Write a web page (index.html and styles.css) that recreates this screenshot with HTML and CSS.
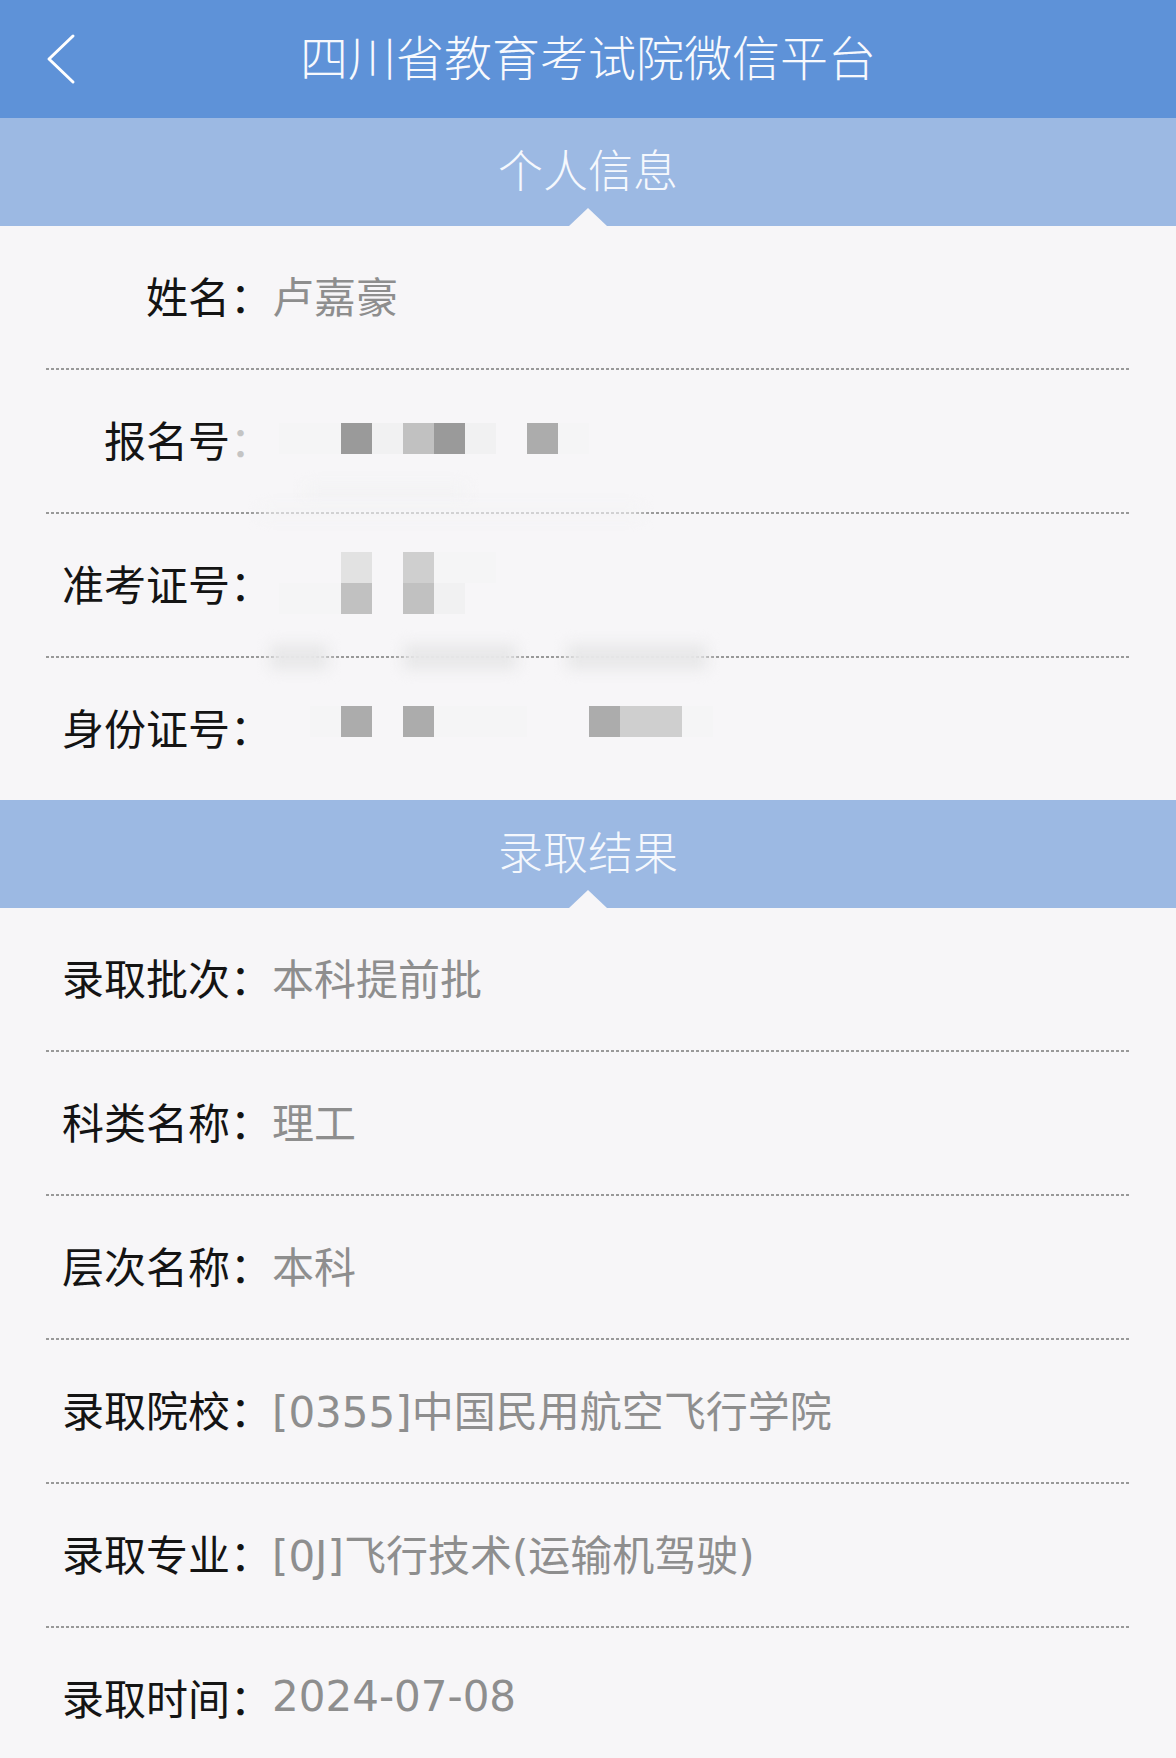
FILE: index.html
```html
<!DOCTYPE html>
<html lang="zh-CN">
<head>
    <meta charset="UTF-8">
    <meta name="viewport" content="width=device-width, initial-scale=1.0">
    <title>四川省教育考试院微信平台</title>
    <link rel="stylesheet" href="styles.css">
</head>
<body>
    <header class="topbar">
        <a class="back" href="#">
            <svg width="30" height="52" viewBox="0 0 30 52">
                <polyline points="27,3 3,26 27,49" fill="none" stroke="#fff" stroke-width="3" stroke-linecap="round" stroke-linejoin="round"/>
            </svg>
        </a>
        <h1>四川省教育考试院微信平台</h1>
        <span></span>
    </header>

    <section class="panel">
        <h2 class="panel-title">个人信息</h2>
        <div class="list">
            <div class="row">
                <span class="label">姓名：</span>
                <span class="value">卢嘉豪</span>
            </div>
            <div class="row">
                <span class="label">报名号<span class="faded">：</span></span>
                <div class="mosaic">
                    <i class="m0"></i><i class="m0"></i><i class="m6"></i><i class="m1"></i><i class="m4"></i>
                    <i class="m6"></i><i class="m1"></i><i></i><i class="m5"></i><i class="m0"></i>
                </div>
                <span class="smudge smudge-faint"></span>
            </div>
            <div class="row">
                <span class="label">准考证号：</span>
                <div class="mosaic">
                    <i></i><i></i><i class="m2"></i><i></i><i class="m3"></i><i class="m0"></i><i class="m0"></i><i></i>
                    <i class="m0"></i><i class="m0"></i><i class="m4"></i><i></i><i class="m4"></i><i class="m1"></i><i></i><i></i>
                </div>
                <span class="smudge smudge-top"></span>
            </div>
            <div class="row">
                <span class="label">身份证号：</span>
                <div class="mosaic mosaic-wide">
                    <i></i><i class="m0"></i><i class="m5"></i><i></i><i class="m5"></i><i class="m0"></i><i class="m0"></i>
                    <i class="m0"></i><i></i><i></i><i class="m5"></i><i class="m3"></i><i class="m3"></i><i class="m0"></i>
                </div>
                <span class="smudge s1"></span>
                <span class="smudge s2"></span>
                <span class="smudge s3"></span>
            </div>
        </div>
    </section>

    <section class="panel">
        <h2 class="panel-title">录取结果</h2>
        <div class="list">
            <div class="row">
                <span class="label">录取批次：</span>
                <span class="value">本科提前批</span>
            </div>
            <div class="row">
                <span class="label">科类名称：</span>
                <span class="value">理工</span>
            </div>
            <div class="row">
                <span class="label">层次名称：</span>
                <span class="value">本科</span>
            </div>
            <div class="row">
                <span class="label">录取院校：</span>
                <span class="value">[0355]中国民用航空飞行学院</span>
            </div>
            <div class="row">
                <span class="label">录取专业：</span>
                <span class="value">[0J]飞行技术(运输机驾驶)</span>
            </div>
            <div class="row">
                <span class="label">录取时间：</span>
                <span class="value">2024-07-08</span>
            </div>
        </div>
    </section>
</body>
</html>
```

FILE: styles.css
```css
body {
    margin: 0;
    background-color: #f7f6f8;
    font-family: "Noto Sans CJK SC", "Noto Sans", sans-serif;
    color: #141414;
}
.topbar {
    height: 118px;
    background-color: #5e92d8;
    display: grid;
    grid-template-columns: 120px 1fr 120px;
    align-items: center;
}
.back {
    display: flex;
    padding-left: 46px;
}
.topbar h1 {
    margin: 0 0 8px;
    font-size: 48px;
    font-weight: 300;
    color: #f7f9fd;
    text-align: center;
}
.panel-title {
    position: relative;
    margin: 0;
    height: 108px;
    line-height: 102px;
    background-color: #9cb9e3;
    color: #f5f8fd;
    font-size: 45px;
    font-weight: 300;
    text-align: center;
}
.panel-title::after {
    content: "";
    position: absolute;
    left: 50%;
    bottom: 0;
    margin-left: -19px;
    border-left: 19px solid transparent;
    border-right: 19px solid transparent;
    border-bottom: 18px solid #f7f6f8;
}
.list {
    margin: 0 46px;
}
.row {
    position: relative;
    height: 137px;
    padding-bottom: 5px;
    display: flex;
    align-items: center;
    font-size: 42px;
}
.row + .row {
    padding-top: 2px;
    background-image: linear-gradient(to right, #999 3px, transparent 3px);
    background-size: 5px 2px;
    background-repeat: repeat-x;
    background-position: left top;
}
.label {
    width: 226px;
    flex-shrink: 0;
    text-align: right;
    white-space: nowrap;
}
.faded {
    color: #c4c4c4;
}
.value {
    color: #8e8e8e;
    white-space: nowrap;
    font-family: "DejaVu Sans", "Noto Sans CJK SC", sans-serif;
}
.mosaic {
    margin-left: 7px;
    display: grid;
    grid-template-columns: repeat(8, 31px);
    grid-auto-rows: 31px;
}
.row:nth-child(2) .mosaic {
    grid-template-columns: repeat(10, 31px);
}
.mosaic-wide {
    grid-template-columns: repeat(14, 31px);
    margin-bottom: 10px;
}
.mosaic i {
    display: block;
}
.m0 { background: #f5f5f6; }
.m1 { background: #f1f1f2; }
.m2 { background: #e2e2e2; }
.m3 { background: #cfcfcf; }
.m4 { background: #c1c1c1; }
.m5 { background: #acacac; }
.m6 { background: #9a9a9a; }
.smudge {
    position: absolute;
    height: 26px;
    background: #e8e8e9;
    filter: blur(7px);
}
.smudge-faint {
    left: 260px;
    width: 160px;
    bottom: 14px;
    height: 14px;
    background: #f3f3f4;
}
.smudge-top {
    left: 215px;
    width: 380px;
    top: -6px;
    height: 12px;
    background: #f4f4f5;
}
.s1 { left: 224px; width: 58px; top: -12px; }
.s2 { left: 357px; width: 114px; top: -12px; }
.s3 { left: 521px; width: 140px; top: -12px; }
```
